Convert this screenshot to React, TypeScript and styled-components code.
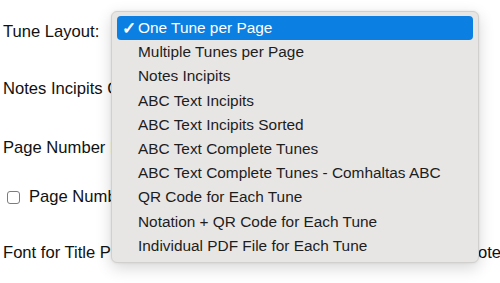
import styled, { createGlobalStyle } from "styled-components"

const Global = createGlobalStyle`
    html, body {
        margin: 0;
        padding: 0;
        background: #ffffff;
        overflow: hidden;
    }
    body {
        font-family: "Liberation Sans", Arial, Helvetica, sans-serif;
        color: #111111;
    }
`

const Page = styled.div`
    position: relative;
    width: 500px;
    height: 283px;
    padding: 20px 0 0 3px;
    box-sizing: border-box;
`

const Row = styled.div<{ $space: number }>`
    display: flex;
    align-items: center;
    height: 24px;
    margin-top: ${(p) => p.$space}px;
    font-size: 16.6px;
    white-space: nowrap;
`

const Label = styled.span<{ $w?: number }>`
    flex: none;
    width: ${(p) => (p.$w ? `${p.$w}px` : "auto")};
    color: #111;
`

const Check = styled.span`
    flex: none;
    box-sizing: border-box;
    width: 13px;
    height: 13px;
    margin: 0 9px 0 4px;
    border: 1px solid #7b7b82;
    border-radius: 3px;
    background: #fff;
`

const Menu = styled.ul`
    position: absolute;
    left: 111px;
    top: 11px;
    width: 356px;
    margin: 0;
    padding: 4px 5px;
    list-style: none;
    background: #e8e6e5;
    border: 1px solid #d2d0cf;
    border-radius: 6px;
    box-shadow: 0 5px 16px rgba(0, 0, 0, 0.16), 0 0 3px rgba(0, 0, 0, 0.08);
`

const Item = styled.li<{ $active?: boolean }>`
    display: flex;
    align-items: center;
    height: 24.2px;
    padding-left: 5px;
    border-radius: 4px;
    font-size: 15.4px;
    color: ${(p) => (p.$active ? "#ffffff" : "#1d1d1d")};
    background: ${(p) => (p.$active ? "#0b80e2" : "transparent")};
`

const Tick = styled.span`
    flex: none;
    width: 16px;
    font-size: 17px;
    font-weight: bold;
    line-height: 1;
`

const options = [
    "One Tune per Page",
    "Multiple Tunes per Page",
    "Notes Incipits",
    "ABC Text Incipits",
    "ABC Text Incipits Sorted",
    "ABC Text Complete Tunes",
    "ABC Text Complete Tunes - Comhaltas ABC",
    "QR Code for Each Tune",
    "Notation + QR Code for Each Tune",
    "Individual PDF File for Each Tune",
]

export default function App() {
    return (
        <Page>
            <Global />
            <Row $space={0}>
                <Label>Tune Layout:</Label>
            </Row>
            <Row $space={33}>
                <Label>Notes Incipits Columns:</Label>
            </Row>
            <Row $space={35}>
                <Label>Page Number Location:</Label>
            </Row>
            <Row $space={25}>
                <Check />
                <Label>Page Number on First Page</Label>
            </Row>
            <Row $space={32}>
                <Label $w={463}>Font for Title Page</Label>
                <Label>Notes</Label>
            </Row>

            <Menu>
                {options.map((o, i) => (
                    <Item key={o} $active={i === 0}>
                        <Tick>{i === 0 ? "✓" : ""}</Tick>
                        {o}
                    </Item>
                ))}
            </Menu>
        </Page>
    )
}
